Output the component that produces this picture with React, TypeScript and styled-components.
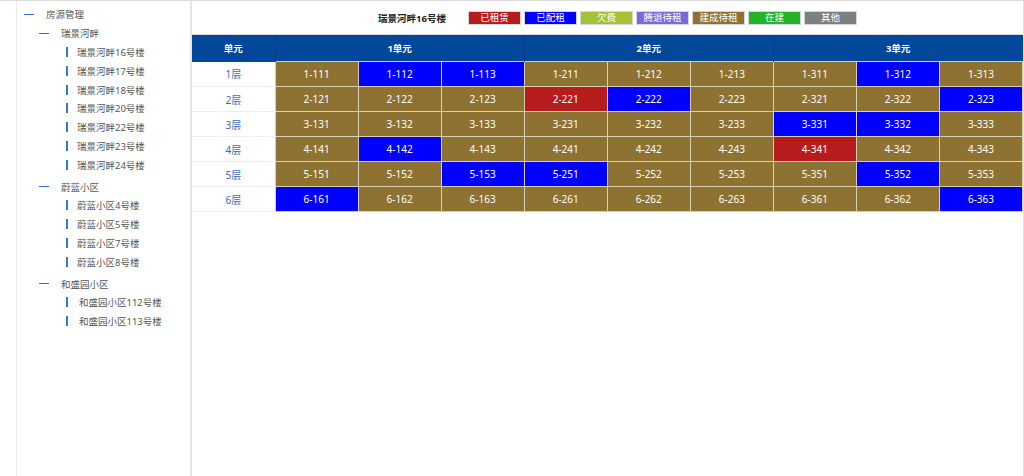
import styled, { createGlobalStyle } from "styled-components";

const GlobalStyle = createGlobalStyle`
  html, body {
    margin: 0;
    padding: 0;
    background: #fff;
    font-family: "Noto Sans", "Noto Sans CJK SC", sans-serif;
  }
`;

// 状态颜色
const STATUS = {
  rented: { label: "已租赁", color: "#b71c1c" },
  allotted: { label: "已配租", color: "#0000ff" },
  arrears: { label: "欠费", color: "#a4c236" },
  vacated: { label: "腾退待租", color: "#7b68d9" },
  built: { label: "建成待租", color: "#8e7232" },
  building: { label: "在建", color: "#22b42a" },
  other: { label: "其他", color: "#7b8083" },
};
type StatusKey = keyof typeof STATUS;

const tree = [
  {
    name: "瑞景河畔",
    items: ["瑞景河畔16号楼", "瑞景河畔17号楼", "瑞景河畔18号楼", "瑞景河畔20号楼", "瑞景河畔22号楼", "瑞景河畔23号楼", "瑞景河畔24号楼"],
  },
  { name: "蔚蓝小区", items: ["蔚蓝小区4号楼", "蔚蓝小区5号楼", "蔚蓝小区7号楼", "蔚蓝小区8号楼"] },
  { name: "和盛园小区", items: ["和盛园小区112号楼", "和盛园小区113号楼"], indent: true },
];

// b = 建成待租, l = 已配租, r = 已租赁
const layout = [
  "bllbbbblb",
  "bbbrlbbbl",
  "bbbbbbllb",
  "blbbbbrbb",
  "bbllbbblb",
  "lbbbbbbbl",
];
const codeMap: Record<string, StatusKey> = { b: "built", l: "allotted", r: "rented" };

const Page = styled.div`
  display: flex;
  height: 475px;
  border-top: 1px solid #dcdcdc;
`;

const Sidebar = styled.div`
  width: 173px;
  margin-left: 16px;
  border-left: 1px solid #ececec;
  border-right: 2px solid #e6e6e6;
  padding-top: 4px;
  color: #555;
  font-size: 9.5px;
`;

const NodeRow = styled.div<{ $level: number }>`
  display: flex;
  align-items: center;
  height: 18.8px;
  padding-left: ${(p) => (p.$level === 1 ? 7 : p.$level === 2 ? 22 : 49)}px;
  white-space: nowrap;
`;

const Dash = styled.span`
  display: inline-block;
  width: 10px;
  height: 1px;
  background: #2f6fcc;
  margin-right: 12px;
`;

const Bar = styled.span<{ $gap: number }>`
  display: inline-block;
  width: 2px;
  height: 10px;
  background: #3a78d0;
  margin-right: ${(p) => p.$gap}px;
`;

const Group = styled.div`
  margin-bottom: 3px;
`;

const Main = styled.div`
  flex: 1;
  border-right: 1px solid #e0e0e0;
`;

const TitleBar = styled.div`
  display: flex;
  justify-content: center;
  align-items: center;
  height: 33px;
  padding-left: 20px;
  border-bottom: 1px solid #dcdcdc;
`;

const Title = styled.span`
  font-size: 9.5px;
  font-weight: bold;
  color: #222;
  margin-right: 22px;
`;

const Legend = styled.div`
  display: flex;
  gap: 3px;
`;

const Tag = styled.span<{ $bg: string }>`
  width: 53px;
  height: 14px;
  box-sizing: border-box;
  border: 1px solid #d6d6d6;
  background: ${(p) => p.$bg};
  color: #fff;
  font-size: 9.5px;
  line-height: 12px;
  text-align: center;
`;

const Table = styled.table`
  width: 100%;
  table-layout: fixed;
  border-collapse: collapse;
  font-size: 10px;
`;

const Th = styled.th`
  height: 26px;
  padding: 0;
  background: #03479a;
  color: #fff;
  font-weight: bold;
  font-size: 9.5px;
  border-right: 1px solid #033c84;
  &:last-child {
    border-right: none;
  }
`;

const FloorCell = styled.td`
  height: 24px;
  padding: 0;
  text-align: center;
  color: #3a6db5;
  border-bottom: 1px solid #eeeeee;
`;

const RoomCell = styled.td<{ $bg: string }>`
  height: 24px;
  padding: 0;
  text-align: center;
  color: #fff;
  background: ${(p) => p.$bg};
  border: 1px solid #d9cfb6;
`;

export default function App() {
  return (
    <>
      <GlobalStyle />
      <Page>
        <Sidebar>
          <NodeRow $level={1}>
            <Dash />
            房源管理
          </NodeRow>
          {tree.map((g) => (
            <Group key={g.name}>
              <NodeRow $level={2}>
                <Dash />
                {g.name}
              </NodeRow>
              {g.items.map((it) => (
                <NodeRow $level={3} key={it}>
                  <Bar $gap={g.indent ? 11 : 9} />
                  {it}
                </NodeRow>
              ))}
            </Group>
          ))}
        </Sidebar>
        <Main>
          <TitleBar>
            <Title>瑞景河畔16号楼</Title>
            <Legend>
              {(Object.keys(STATUS) as StatusKey[]).map((k) => (
                <Tag key={k} $bg={STATUS[k].color}>
                  {STATUS[k].label}
                </Tag>
              ))}
            </Legend>
          </TitleBar>
          <Table>
            <thead>
              <tr>
                <Th>单元</Th>
                <Th colSpan={3}>1单元</Th>
                <Th colSpan={3}>2单元</Th>
                <Th colSpan={3}>3单元</Th>
              </tr>
            </thead>
            <tbody>
              {layout.map((row, i) => {
                const floor = i + 1;
                return (
                  <tr key={floor}>
                    <FloorCell>{floor}层</FloorCell>
                    {row.split("").map((c, j) => {
                      const unit = Math.floor(j / 3) + 1;
                      const num = (j % 3) + 1;
                      return (
                        <RoomCell key={j} $bg={STATUS[codeMap[c]].color}>
                          {`${floor}-${unit}${floor}${num}`}
                        </RoomCell>
                      );
                    })}
                  </tr>
                );
              })}
            </tbody>
          </Table>
        </Main>
      </Page>
    </>
  );
}
